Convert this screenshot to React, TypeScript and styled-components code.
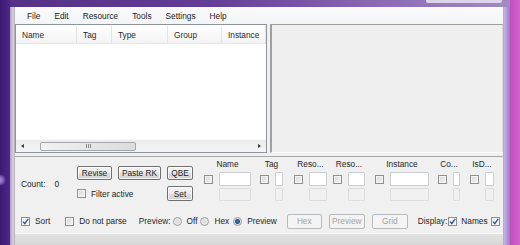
import React, { FC } from "react";
import styled, { createGlobalStyle } from "styled-components";

const GlobalStyle = createGlobalStyle`
  html, body {
    margin: 0;
    padding: 0;
  }
  body {
    font-family: "Liberation Sans", Arial, sans-serif;
    font-size: 8.3px;
    color: #1e1e1e;
  }
`;

const menuItems = ["File", "Edit", "Resource", "Tools", "Settings", "Help"];

const columns = [
  { title: "Name", width: 61 },
  { title: "Tag", width: 35 },
  { title: "Type", width: 56 },
  { title: "Group", width: 54 },
  { title: "Instance", width: 44 },
];

const filters = [
  { label: "Name", ml: 0, w: 32 },
  { label: "Tag", ml: 9, w: 8 },
  { label: "Reso...", ml: 11, w: 18 },
  { label: "Reso...", ml: 6, w: 17 },
  { label: "Instance", ml: 10, w: 39 },
  { label: "Co...", ml: 9, w: 7 },
  { label: "IsD...", ml: 10, w: 9 },
];

const Tick: FC = () => (
  <svg width="7" height="7" viewBox="0 0 7 7">
    <path d="M1 3.6 L2.8 5.6 L6.2 0.9" stroke="#2b4f9e" strokeWidth="1.3" fill="none" />
  </svg>
);

export default function App() {
  return (
    <>
      <GlobalStyle />
      <Desktop>
        <Window>
          <TitleStrip>
            <TitleButtons />
          </TitleStrip>
          <FrameRow>
            <SideFrame $side="left" />
            <Client>
              <MenuBar>
                {menuItems.map((m) => (
                  <MenuItem key={m}>{m}</MenuItem>
                ))}
              </MenuBar>
              <MainArea>
                <ListPanel>
                  <HeaderRow>
                    {columns.map((c) => (
                      <HeaderCell key={c.title} $width={c.width}>
                        {c.title}
                      </HeaderCell>
                    ))}
                  </HeaderRow>
                  <ListBody />
                  <HScroll>
                    <Arrow $dir="left" />
                    <ScrollTrack>
                      <Thumb>
                        <Grip />
                        <Grip />
                        <Grip />
                      </Thumb>
                    </ScrollTrack>
                    <Arrow $dir="right" />
                  </HScroll>
                </ListPanel>
                <PreviewPanel />
              </MainArea>
              <BottomPanel>
                <TopRow>
                  <CountBlock>
                    <span>Count:</span>
                    <span>0</span>
                  </CountBlock>
                  <ButtonGrid>
                    <Button>Revise</Button>
                    <Button>Paste RK</Button>
                    <Button>QBE</Button>
                    <CheckLabel $span={2}>
                      <CheckBox />
                      Filter active
                    </CheckLabel>
                    <Button>Set</Button>
                  </ButtonGrid>
                  <Filters>
                    {filters.map((f, i) => (
                      <FilterColumn key={i} $ml={f.ml}>
                        <FilterLabel>{f.label}</FilterLabel>
                        <CheckBox />
                        <TextBox $w={f.w} />
                        <DisabledBox $w={f.w} />
                      </FilterColumn>
                    ))}
                  </Filters>
                </TopRow>
                <OptionsRow>
                  <CheckLabel>
                    <CheckBox $checked>
                      <Tick />
                    </CheckBox>
                    Sort
                  </CheckLabel>
                  <CheckLabel $ml={15}>
                    <CheckBox />
                    Do not parse
                  </CheckLabel>
                  <OptionText $ml={12}>Preview:</OptionText>
                  <CheckLabel $ml={2}>
                    <Radio />
                    Off
                  </CheckLabel>
                  <CheckLabel $ml={3}>
                    <Radio />
                    Hex
                  </CheckLabel>
                  <CheckLabel $ml={4}>
                    <Radio $selected />
                    Preview
                  </CheckLabel>
                  <ButtonRow>
                    <Button disabled $w={35}>Hex</Button>
                    <Button disabled $w={36}>Preview</Button>
                    <Button disabled $w={36}>Grid</Button>
                  </ButtonRow>
                  <OptionText $ml={10}>Display:</OptionText>
                  <CheckLabel $ml={1} $gap={4}>
                    <CheckBox $checked>
                      <Tick />
                    </CheckBox>
                    Names
                  </CheckLabel>
                  <CheckBox $checked $ml={3}>
                    <Tick />
                  </CheckBox>
                </OptionsRow>
              </BottomPanel>
              <StatusBar />
            </Client>
            <SideFrame $side="right" />
          </FrameRow>
        </Window>
      </Desktop>
    </>
  );
}

const Desktop = styled.div`
  width: 520px;
  height: 245px;
  overflow: hidden;
  display: flex;
  background:
    radial-gradient(circle at 0px 180px, #a587dc 0, #8a68c8 3px, rgba(120, 80, 190, 0) 6px),
    linear-gradient(90deg, #3d1a70 0, #4f2690 10px, #7b58b0 50%, #a07ac4 97%, #c14fc0 98.2%, #d462ca 100%);
`;

const Window = styled.div`
  margin-left: 10px;
  width: 500px;
  display: flex;
  flex-direction: column;
`;

const TitleStrip = styled.div`
  height: 7px;
  display: flex;
  justify-content: flex-end;
  background: linear-gradient(90deg, #553186 0%, #633d96 40%, #8c6cb6 75%, #a28ac4 100%);
`;

const TitleButtons = styled.div`
  width: 76px;
  height: 3px;
  margin-right: 8px;
  background: #ddd4ea;
  border-radius: 0 0 2px 2px;
`;

const FrameRow = styled.div`
  flex: 1;
  display: flex;
`;

const SideFrame = styled.div<{ $side: "left" | "right" }>`
  width: ${({ $side }) => ($side === "left" ? "5px" : "7px")};
  background: ${({ $side }) =>
    $side === "left"
      ? "linear-gradient(90deg, #a99dbe 0, #c9c3d4 2px, #d6d2dc 4px, #9d98a6 5px)"
      : "linear-gradient(90deg, #a8a4b0 0, #c6b6e0 1px, #b19ad6 4px, #9a7cc6 7px)"};
`;

const Client = styled.div`
  width: 488px;
  display: flex;
  flex-direction: column;
  background: #f0f0f0;
`;

const MenuBar = styled.div`
  height: 17px;
  display: flex;
  align-items: center;
  column-gap: 14px;
  padding-left: 12px;
  background: linear-gradient(#fbfbfc, #f3f4f6);
`;

const MenuItem = styled.span`
  color: #1a1a1a;
`;

const MainArea = styled.div`
  height: 129px;
  display: flex;
  column-gap: 3px;
`;

const ListPanel = styled.div`
  width: 250px;
  display: flex;
  flex-direction: column;
  border: 1px solid #8f949c;
  background: #fff;
`;

const HeaderRow = styled.div`
  height: 17px;
  margin-top: 1px;
  display: flex;
  background: linear-gradient(#ffffff, #f3f3f4);
  border-bottom: 1px solid #e4e5e7;
`;

const HeaderCell = styled.div<{ $width: number }>`
  width: ${({ $width }) => $width}px;
  flex-shrink: 0;
  padding-left: 6px;
  box-sizing: border-box;
  display: flex;
  align-items: center;
  border-right: 1px solid #e2e3e5;
  color: #2a2a2a;
`;

const ListBody = styled.div`
  flex: 1;
  background: #fff;
`;

const HScroll = styled.div`
  height: 12px;
  display: flex;
  align-items: center;
  background: linear-gradient(#ebebeb, #f4f4f4);
  border-top: 1px solid #f7f7f7;
`;

const Arrow = styled.div<{ $dir: "left" | "right" }>`
  width: 0;
  height: 0;
  margin: 0 ${({ $dir }) => ($dir === "left" ? "9px 0 5px" : "5px 0 9px")};
  border-top: 2.5px solid transparent;
  border-bottom: 2.5px solid transparent;
  ${({ $dir }) =>
    $dir === "left" ? "border-right: 3px solid #3a3a3a;" : "border-left: 3px solid #3a3a3a;"}
`;

const ScrollTrack = styled.div`
  flex: 1;
  height: 10px;
  display: flex;
  align-items: center;
  padding-left: 7px;
`;

const Thumb = styled.div`
  width: 96px;
  height: 9px;
  box-sizing: border-box;
  border: 1px solid #a4a7ab;
  border-radius: 2px;
  background: linear-gradient(90deg, #f2f2f2, #e6e6e6 50%, #dcdcdc);
  display: flex;
  justify-content: center;
  align-items: center;
  column-gap: 1px;
`;

const Grip = styled.span`
  width: 1px;
  height: 4px;
  background: #8a8a8a;
`;

const PreviewPanel = styled.div`
  width: 233px;
  box-sizing: border-box;
  border-top: 1px solid #a0a0a0;
  border-left: 2px solid #9f9f9f;
  border-right: 1px solid #d8d8d8;
  border-bottom: 1px solid #fdfdfd;
  background: #efefef;
`;

const BottomPanel = styled.div`
  height: 77px;
  margin-top: 3px;
  box-sizing: border-box;
  border-top: 1px solid #a9a9a9;
  padding-top: 3px;
  display: flex;
  flex-direction: column;
  background: #f0f0f0;
`;

const TopRow = styled.div`
  height: 44px;
  display: flex;
  align-items: flex-start;
  padding-left: 6px;
`;

const CountBlock = styled.div`
  width: 56px;
  align-self: center;
  display: flex;
  column-gap: 9px;
  margin-top: 3px;
`;

const ButtonGrid = styled.div`
  margin-top: 6px;
  display: grid;
  grid-template-columns: 35px 43px 26px;
  grid-template-rows: 14px 15px;
  column-gap: 6px;
  row-gap: 6px;
`;

const Button = styled.button<{ $w?: number }>`
  ${({ $w }) => ($w ? `width: ${$w}px;` : "")}
  height: ${({ $w }) => ($w ? "15px" : "100%")};
  padding: 0;
  box-sizing: border-box;
  font-family: inherit;
  font-size: 8.3px;
  color: #1e1e1e;
  border: 1px solid #707070;
  border-radius: 2px;
  background: linear-gradient(#f4f4f4, #ececec 48%, #dedede 52%, #d2d2d2);
  box-shadow: inset 0 0 0 1px rgba(255, 255, 255, 0.7);
  &:disabled {
    color: #a3a3a3;
    border-color: #b7babc;
    background: #f4f4f4;
    box-shadow: none;
  }
`;

const CheckLabel = styled.label<{ $span?: number; $ml?: number; $gap?: number }>`
  display: flex;
  align-items: center;
  column-gap: ${({ $gap }) => $gap ?? 5}px;
  white-space: nowrap;
  ${({ $span }) => ($span ? `grid-column: span ${$span};` : "")}
  margin-left: ${({ $ml }) => $ml ?? 0}px;
`;

const CheckBox = styled.span<{ $checked?: boolean; $ml?: number }>`
  width: 9px;
  height: 9px;
  flex-shrink: 0;
  box-sizing: border-box;
  margin-left: ${({ $ml }) => $ml ?? 0}px;
  border: 1px solid #8e8f8f;
  background: ${({ $checked }) =>
    $checked ? "linear-gradient(135deg, #e6eaf2, #fafbfd)" : "linear-gradient(135deg, #d6d6d6, #f6f6f6)"};
  box-shadow: inset 0 0 0 1px #f4f4f4;
  display: flex;
  align-items: center;
  justify-content: center;
`;

const Radio = styled.span<{ $selected?: boolean }>`
  width: 9px;
  height: 9px;
  flex-shrink: 0;
  box-sizing: border-box;
  border-radius: 50%;
  border: 1px solid #9a9a9a;
  background: ${({ $selected }) =>
    $selected
      ? "radial-gradient(circle, #2b7fcf 0, #1b4f8e 2px, #e6e6e6 3px, #f6f6f6 100%)"
      : "radial-gradient(circle, #d8d8d8 0, #f4f4f4 100%)"};
`;

const Filters = styled.div`
  margin-left: 11px;
  display: flex;
`;

const FilterColumn = styled.div<{ $ml: number }>`
  margin-left: ${({ $ml }) => $ml}px;
  display: grid;
  grid-template-columns: 9px auto;
  grid-template-rows: 12px 14px 13px;
  column-gap: 6px;
  row-gap: 0;
  align-items: center;
  & > :nth-child(4) {
    grid-column: 2;
    margin-top: 4px;
  }
`;

const FilterLabel = styled.span`
  grid-column: 1 / span 2;
  justify-self: center;
  align-self: start;
  white-space: nowrap;
  margin-top: -1px;
`;

const TextBox = styled.span<{ $w: number }>`
  width: ${({ $w }) => $w}px;
  height: 14px;
  box-sizing: border-box;
  border: 1px solid #c9cdd2;
  border-radius: 1px;
  background: #fff;
`;

const DisabledBox = styled.span<{ $w: number }>`
  width: ${({ $w }) => $w}px;
  height: 13px;
  box-sizing: border-box;
  border: 1px solid #dadbdc;
  border-radius: 1px;
  background: #f0f0f0;
`;

const OptionsRow = styled.div`
  margin-top: 9px;
  height: 16px;
  display: flex;
  align-items: center;
  padding-left: 6px;
  white-space: nowrap;
`;

const OptionText = styled.span<{ $ml?: number }>`
  margin-left: ${({ $ml }) => $ml ?? 0}px;
  color: #2a2a2a;
`;

const ButtonRow = styled.div`
  margin-left: 10px;
  display: flex;
  column-gap: 7px;
`;

const StatusBar = styled.div`
  flex: 1;
  border-top: 1px solid #fbfbfb;
  background: linear-gradient(#e2e2e2, #d6d6d6);
`;
